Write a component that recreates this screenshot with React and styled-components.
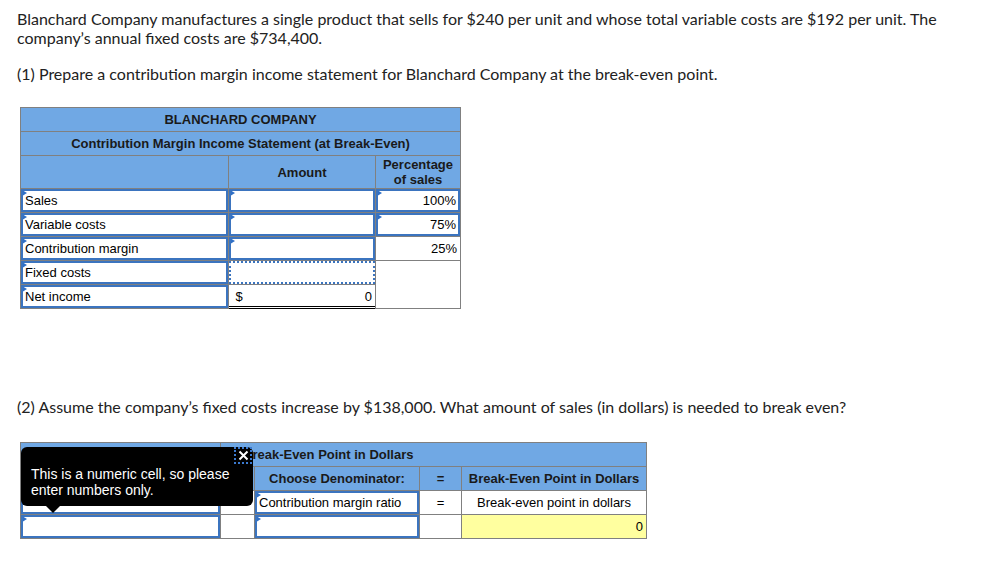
import React from 'react';
import styled, { createGlobalStyle } from 'styled-components';

const GlobalStyle = createGlobalStyle`
  html, body {
    margin: 0;
    padding: 0;
    background: #fff;
  }
`;

const BLUE_HEAD = '#70a8e4';
const INPUT_BLUE = '#3b74bf';
const GRID = '#808080';

const Page = styled.div`
  padding: 9px 17px 0 17px;
  font-family: Lato, 'Liberation Sans', sans-serif;
  color: #222;
`;

const Para = styled.p`
  margin: ${(p) => p.$before || 0}px 0 ${(p) => p.$after || 0}px 0;
  font-size: 16px;
  line-height: 19px;
  max-width: 940px;
`;

const Table = styled.table`
  border-collapse: collapse;
  table-layout: fixed;
  margin: 0 0 ${(p) => p.$after || 0}px 3px;
  width: ${(p) => p.$width}px;
  font-family: 'Liberation Sans', Arial, sans-serif;
  font-size: 13px;
  color: #000;
`;

const Head = styled.td`
  background: ${BLUE_HEAD};
  border: 1px solid ${GRID};
  font-weight: bold;
  color: #1a1a1a;
  text-align: ${(p) => p.$align || 'center'};
  padding: 0 ${(p) => p.$padX ?? 2}px;
  height: ${(p) => p.$h || 23}px;
  line-height: 15px;
  white-space: nowrap;
`;

const Cell = styled.td`
  border: 1px solid ${GRID};
  ${(p) => p.$topRule && 'border-top: 1px solid #000;'}
  background: ${(p) => p.$bg || '#fff'};
  height: 23px;
  padding: 0;
  position: relative;
  text-align: ${(p) => p.$align || 'left'};
  vertical-align: middle;

  &::after {
    content: '';
    display: ${(p) => (p.$double ? 'block' : 'none')};
    position: absolute;
    left: 0;
    right: 0;
    bottom: -1px;
    height: 1px;
    border-top: 1px solid #000;
    border-bottom: 1px solid #000;
  }
`;

const Plain = styled.div`
  padding: 0 3px;
  line-height: 22px;
  display: flex;
  justify-content: ${(p) => p.$justify || 'flex-start'};
`;

const InputBox = styled.div`
  box-sizing: border-box;
  height: 23px;
  border: 2px ${(p) => (p.$dotted ? 'dotted' : 'solid')} ${INPUT_BLUE};
  padding: 0 2px;
  line-height: 19px;
  text-align: ${(p) => p.$align || 'left'};
  position: relative;
  white-space: nowrap;
  overflow: hidden;

  &::before {
    content: '';
    display: ${(p) => (p.$flag === false ? 'none' : 'block')};
    position: absolute;
    left: -1px;
    top: -1px;
    width: 0;
    height: 0;
    border-left: 5px solid #2f6fc6;
    border-top: 3px solid transparent;
    border-bottom: 3px solid transparent;
  }
`;

const Wrap = styled.div`
  position: relative;
  width: fit-content;
`;

const Tooltip = styled.div`
  position: absolute;
  left: 4px;
  top: 5px;
  width: 232px;
  height: 59px;
  box-sizing: border-box;
  background: #000;
  border-radius: 6px;
  color: #fff;
  font-family: 'Liberation Sans', Arial, sans-serif;
  font-size: 14px;
  line-height: 16px;
  padding: 19px 10px 0 10px;

  &::after {
    content: '';
    position: absolute;
    left: 25px;
    bottom: -7px;
    border-top: 7px solid #000;
    border-left: 7px solid transparent;
    border-right: 7px solid transparent;
  }
`;

const Close = styled.div`
  position: absolute;
  right: 1px;
  top: 0;
  width: 18px;
  height: 17px;
  box-sizing: border-box;
  border: 2px dotted #3b7ad0;
  display: flex;
  align-items: center;
  justify-content: center;
`;

const X = () => (
  <svg width="11" height="11" viewBox="0 0 11 11">
    <path d="M1.5 1.5 L9.5 9.5 M9.5 1.5 L1.5 9.5" stroke="#fff" strokeWidth="2" />
  </svg>
);

const rows = [
  { label: 'Sales', pct: '100%', pctInput: true },
  { label: 'Variable costs', pct: '75%', pctInput: true },
  { label: 'Contribution margin', pct: '25%', pctInput: false, rule: true },
];

export default function App() {
  return (
    <>
      <GlobalStyle />
      <Page>
        <Para>
          Blanchard Company manufactures a single product that sells for $240 per unit and whose total variable costs are $192 per unit. The company’s annual fixed costs are $734,400.
        </Para>
        <Para $before={17} $after={24}>
          (1) Prepare a contribution margin income statement for Blanchard Company at the break-even point.
        </Para>

        <Table $width={440} $after={88}>
          <colgroup>
            <col style={{ width: 208 }} />
            <col style={{ width: 147 }} />
            <col style={{ width: 85 }} />
          </colgroup>
          <tbody>
            <tr>
              <Head colSpan={3}>BLANCHARD COMPANY</Head>
            </tr>
            <tr>
              <Head colSpan={3}>Contribution Margin Income Statement (at Break-Even)</Head>
            </tr>
            <tr>
              <Head $h={32} />
              <Head $h={32}>Amount</Head>
              <Head $h={32}>Percentage<br />of sales</Head>
            </tr>
            {rows.map((r) => (
              <tr key={r.label}>
                <Cell>
                  <InputBox>{r.label}</InputBox>
                </Cell>
                <Cell $topRule={r.rule}>
                  <InputBox />
                </Cell>
                <Cell $topRule={r.rule}>
                  {r.pctInput ? (
                    <InputBox $align="right">{r.pct}</InputBox>
                  ) : (
                    <Plain $justify="flex-end">{r.pct}</Plain>
                  )}
                </Cell>
              </tr>
            ))}
            <tr>
              <Cell>
                <InputBox>Fixed costs</InputBox>
              </Cell>
              <Cell>
                <InputBox $dotted $flag={false} />
              </Cell>
              <Cell rowSpan={2} />
            </tr>
            <tr>
              <Cell>
                <InputBox>Net income</InputBox>
              </Cell>
              <Cell $double>
                <Plain $justify="space-between">
                  <span>&nbsp;$</span>
                  <span>0</span>
                </Plain>
              </Cell>
            </tr>
          </tbody>
        </Table>

        <Para $after={26}>
          (2) Assume the company’s fixed costs increase by $138,000. What amount of sales (in dollars) is needed to break even?
        </Para>

        <Wrap>
          <Table $width={626}>
            <colgroup>
              <col style={{ width: 200 }} />
              <col style={{ width: 34 }} />
              <col style={{ width: 165 }} />
              <col style={{ width: 42 }} />
              <col style={{ width: 185 }} />
            </colgroup>
            <tbody>
              <tr>
                <Head />
                <Head colSpan={4} $align="left" $padX={0}>
                  <span style={{ marginLeft: 22 }}>Break-Even Point in Dollars</span>
                </Head>
              </tr>
              <tr>
                <Head />
                <Head />
                <Head>Choose Denominator:</Head>
                <Head>=</Head>
                <Head>Break-Even Point in Dollars</Head>
              </tr>
              <tr>
                <Cell>
                  <InputBox />
                </Cell>
                <Cell />
                <Cell>
                  <InputBox>Contribution margin ratio</InputBox>
                </Cell>
                <Cell $align="center">=</Cell>
                <Cell $align="center">Break-even point in dollars</Cell>
              </tr>
              <tr>
                <Cell>
                  <InputBox />
                </Cell>
                <Cell />
                <Cell>
                  <InputBox />
                </Cell>
                <Cell />
                <Cell $bg="#ffff9f">
                  <Plain $justify="flex-end">0</Plain>
                </Cell>
              </tr>
            </tbody>
          </Table>
          <Tooltip>
            This is a numeric cell, so please
            <br />
            enter numbers only.
            <Close>
              <X />
            </Close>
          </Tooltip>
        </Wrap>
      </Page>
    </>
  );
}
